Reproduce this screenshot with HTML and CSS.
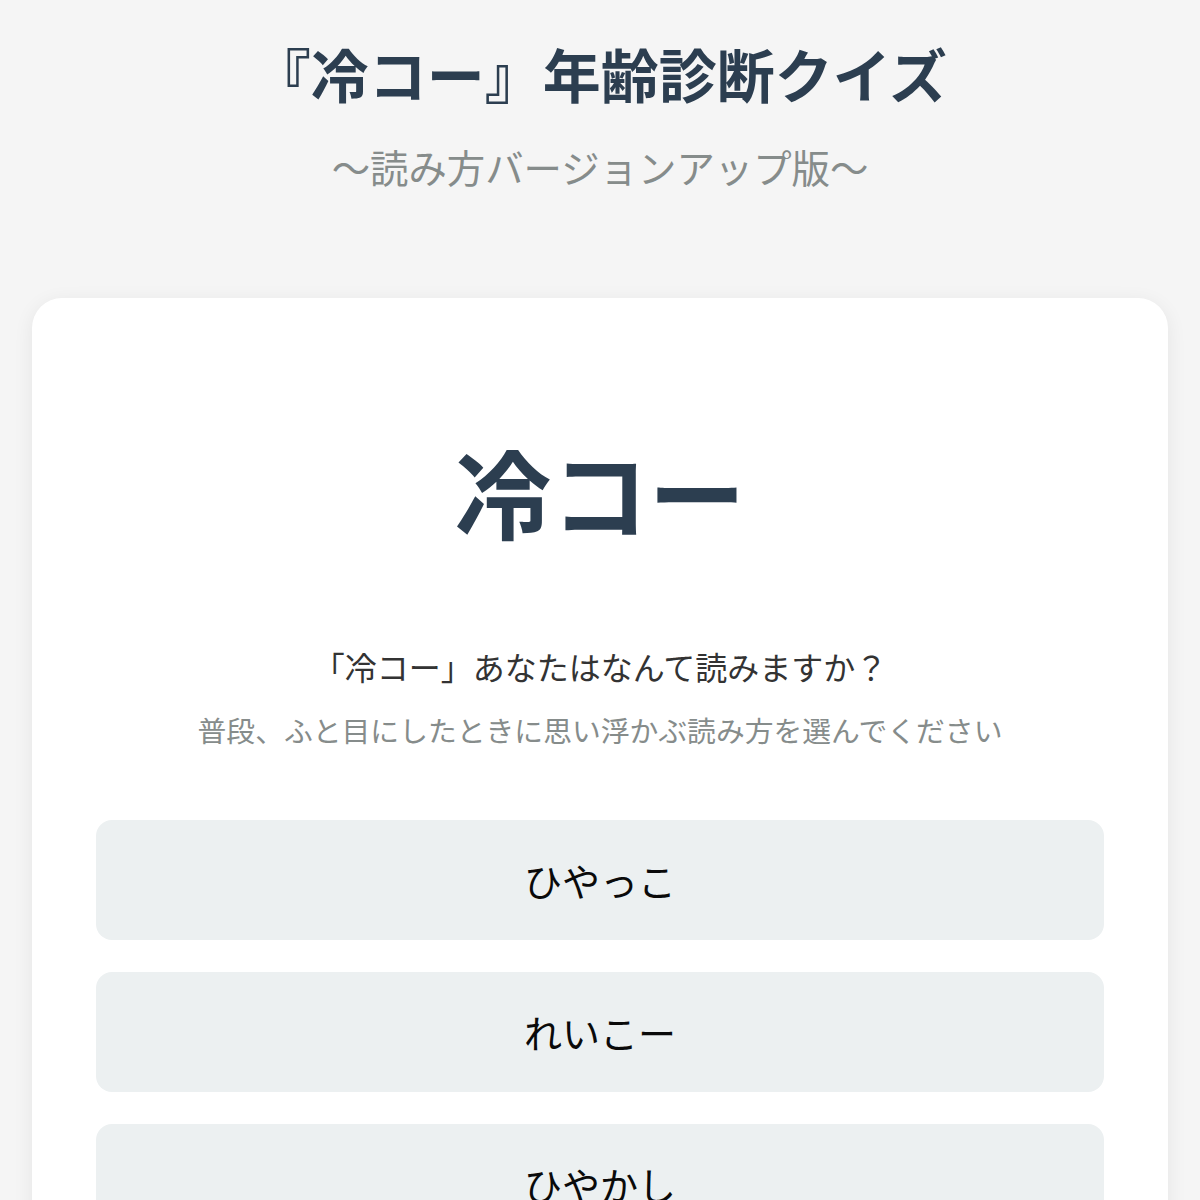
FILE: index.html
```html
<!DOCTYPE html>
<html lang="ja">
<head>
<meta charset="utf-8">
<title>『冷コー』年齢診断クイズ</title>
<link rel="stylesheet" href="styles.css">
</head>
<body>
<div class="page">
  <header class="header">
    <h1 class="title">『冷コー』年齢診断クイズ</h1>
    <p class="subtitle">～読み方バージョンアップ版～</p>
  </header>
  <main class="card">
    <div class="word">冷コー</div>
    <p class="question">「冷コー」あなたはなんて読みますか？</p>
    <p class="hint">普段、ふと目にしたときに思い浮かぶ読み方を選んでください</p>
    <div class="options">
      <button class="option">ひやっこ</button>
      <button class="option">れいこー</button>
      <button class="option">ひやかし</button>
      <button class="option">れいコーヒー</button>
    </div>
  </main>
</div>
</body>
</html>
```
FILE: styles.css
```css
html, body {
  margin: 0;
  padding: 0;
  background: #f5f5f5;
}
body {
  font-family: "Noto Sans CJK JP", "Noto Sans", sans-serif;
  color: #333;
}
.page {
  padding: 39px 32px;
}
.header {
  text-align: center;
}
.title {
  margin: 0;
  font-size: 58px;
  line-height: 1.2;
  font-weight: 700;
  color: #2c3e50;
}
.subtitle {
  margin: 29px 0 0;
  font-size: 38.4px;
  line-height: 1.5;
  color: #868c8b;
}
.card {
  margin-top: 103px;
  background: #fff;
  border-radius: 30px;
  padding: 134px 64px 64px;
  box-shadow: 0 4px 20px rgba(0, 0, 0, 0.07);
}
.word {
  text-align: center;
  font-size: 97px;
  line-height: 1.2;
  font-weight: 700;
  color: #2c3e50;
}
.question {
  margin: 93px 0 0;
  text-align: center;
  font-size: 32px;
  line-height: 1.5;
  color: #333;
}
.hint {
  margin: 18px 0 0;
  text-align: center;
  font-size: 28.8px;
  line-height: 1.5;
  color: #868c8b;
}
.options {
  margin-top: 69px;
  display: flex;
  flex-direction: column;
  gap: 32px;
}
.option {
  height: 120px;
  border: none;
  border-radius: 16px;
  background: #ecf0f1;
  font-family: "Noto Sans CJK JP", "Noto Sans", sans-serif;
  font-size: 38px;
  color: #0a0a0a;
  display: flex;
  align-items: center;
  justify-content: center;
  padding: 0;
}
```
